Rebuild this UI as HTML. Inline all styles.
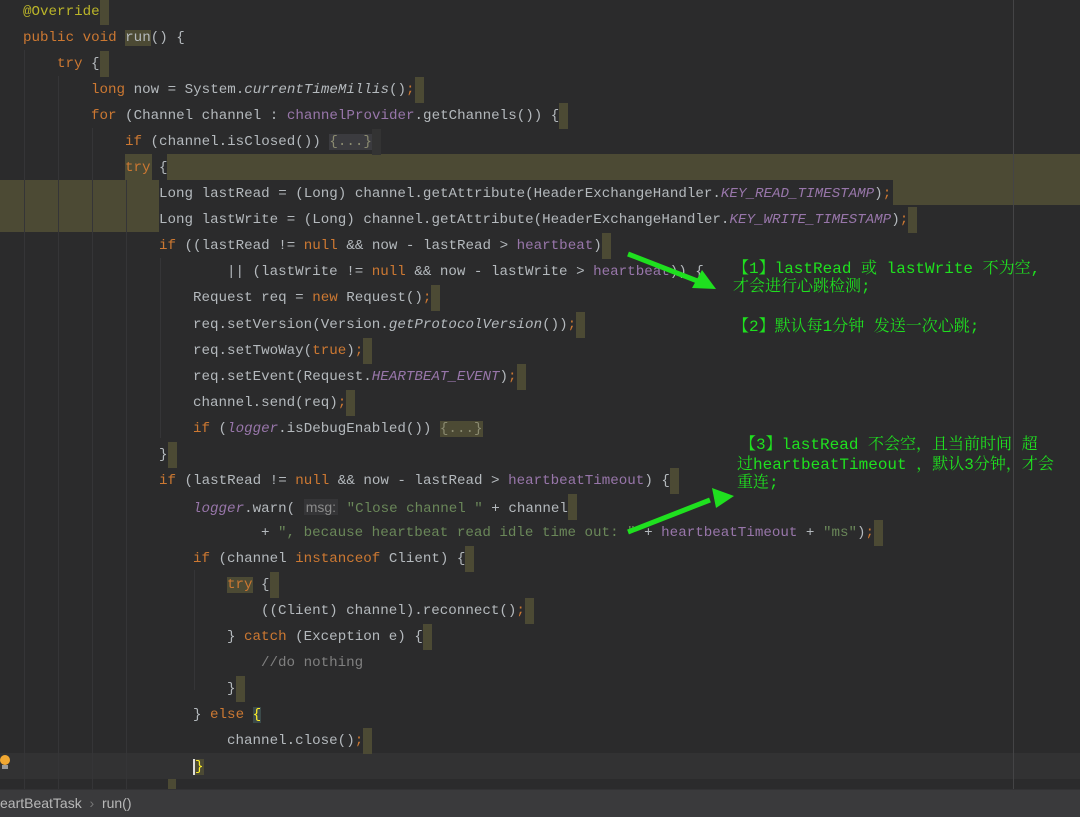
<!DOCTYPE html>
<html><head><meta charset="utf-8"><style>
body{margin:0;width:1080px;height:816px;overflow:hidden;background:#2b2b2c;position:relative;font-family:"Liberation Mono",monospace;font-size:14.2px;color:#b4b9bd}
.l{position:absolute;height:26px;line-height:26px;white-space:pre}
.k{color:#cc7832}.f{color:#9876aa}.i{font-style:italic}.s{color:#6a8759}.c{color:#808080}.a{color:#bbb529}
.m{display:inline-block;width:9px;height:26px;background:#4c4a34;vertical-align:top}
.fo{background:#3b3b3f;color:#8a8a70}
.hl{position:absolute;background:#4c4a34}
.g{position:absolute;width:1px;background:#353537}
.ann{position:absolute;color:#1fe01f;font-family:"Liberation Mono","Noto Serif CJK SC",monospace;font-size:16px;line-height:18px;white-space:pre}
.hint{color:#8a8a8a;background:#353537;font-family:"Liberation Sans",sans-serif;font-size:14px;padding:0 2px}
</style></head><body>
<div style="position:absolute;left:0;top:753px;width:1080px;height:26px;background:#323233"></div>
<div class="hl" style="left:125px;top:154px;width:27px;height:26px"></div>
<div class="hl" style="left:167px;top:154px;width:913px;height:26px"></div>
<div class="hl" style="left:893px;top:180px;width:187px;height:25px"></div>
<div class="hl" style="left:0;top:180px;width:159px;height:52px"></div>
<div style="position:absolute;left:1013px;top:0;width:1px;height:790px;background:#444446"></div>
<div class="g" style="left:24px;top:50px;height:740px"></div>
<div class="g" style="left:58px;top:76px;height:714px"></div>
<div class="g" style="left:92px;top:128px;height:662px"></div>
<div class="g" style="left:126px;top:180px;height:610px"></div>
<div class="g" style="left:160px;top:258px;height:180px"></div>
<div class="g" style="left:194px;top:570px;height:120px"></div>

<div class="l a" style="left:23px;top:-1px">@Override<span class="m"></span></div>
<div class="l" style="left:23px;top:25px"><span class="k">public void </span><span style="background:#4c4a34">run</span>() {</div>
<div class="l" style="left:57px;top:51px"><span class="k">try</span> {<span class="m"></span></div>
<div class="l" style="left:91px;top:77px"><span class="k">long</span> now = System.<span class="i">currentTimeMillis</span>()<span class="k">;</span><span class="m"></span></div>
<div class="l" style="left:91px;top:103px"><span class="k">for</span> (Channel channel : <span class="f">channelProvider</span>.getChannels()) {<span class="m"></span></div>
<div class="l" style="left:125px;top:129px"><span class="k">if</span> (channel.isClosed()) <span class="fo">{...}</span><span class="m" style="background:#333"></span></div>
<div class="l" style="left:125px;top:155px"><span class="k">try</span> {</div>
<div class="l" style="left:159px;top:181px">Long lastRead = (Long) channel.getAttribute(HeaderExchangeHandler.<span class="f i">KEY_READ_TIMESTAMP</span>)<span class="k">;</span></div>
<div class="l" style="left:159px;top:207px">Long lastWrite = (Long) channel.getAttribute(HeaderExchangeHandler.<span class="f i">KEY_WRITE_TIMESTAMP</span>)<span class="k">;</span><span class="m"></span></div>
<div class="l" style="left:159px;top:233px"><span class="k">if</span> ((lastRead != <span class="k">null</span> &amp;&amp; now - lastRead &gt; <span class="f">heartbeat</span>)<span class="m"></span></div>
<div class="l" style="left:227px;top:259px">|| (lastWrite != <span class="k">null</span> &amp;&amp; now - lastWrite &gt; <span class="f">heartbeat</span>)) {</div>
<div class="l" style="left:193px;top:285px">Request req = <span class="k">new</span> Request()<span class="k">;</span><span class="m"></span></div>
<div class="l" style="left:193px;top:312px">req.setVersion(Version.<span class="i">getProtocolVersion</span>())<span class="k">;</span><span class="m"></span></div>
<div class="l" style="left:193px;top:338px">req.setTwoWay(<span class="k">true</span>)<span class="k">;</span><span class="m"></span></div>
<div class="l" style="left:193px;top:364px">req.setEvent(Request.<span class="f i">HEARTBEAT_EVENT</span>)<span class="k">;</span><span class="m"></span></div>
<div class="l" style="left:193px;top:390px">channel.send(req)<span class="k">;</span><span class="m"></span></div>
<div class="l" style="left:193px;top:416px"><span class="k">if</span> (<span class="f i">logger</span>.isDebugEnabled()) <span class="fo" style="background:#4c4a34">{...}</span></div>
<div class="l" style="left:159px;top:442px">}<span class="m"></span></div>
<div class="l" style="left:159px;top:468px"><span class="k">if</span> (lastRead != <span class="k">null</span> &amp;&amp; now - lastRead &gt; <span class="f">heartbeatTimeout</span>) {<span class="m"></span></div>
<div class="l" style="left:193px;top:494px"><span class="f i">logger</span>.warn( <span class="hint">msg:</span> <span class="s">"Close channel "</span> + channel<span class="m"></span></div>
<div class="l" style="left:261px;top:520px">+ <span class="s">", because heartbeat read idle time out: "</span> + <span class="f">heartbeatTimeout</span> + <span class="s">"ms"</span>)<span class="k">;</span><span class="m"></span></div>
<div class="l" style="left:193px;top:546px"><span class="k">if</span> (channel <span class="k">instanceof</span> Client) {<span class="m"></span></div>
<div class="l" style="left:227px;top:572px"><span class="k" style="background:#4c4a34">try</span> {<span class="m"></span></div>
<div class="l" style="left:261px;top:598px">((Client) channel).reconnect()<span class="k">;</span><span class="m"></span></div>
<div class="l" style="left:227px;top:624px">} <span class="k">catch</span> (Exception e) {<span class="m"></span></div>
<div class="l c" style="left:261px;top:650px">//do nothing</div>
<div class="l" style="left:227px;top:676px">}<span class="m"></span></div>
<div class="l" style="left:193px;top:702px">} <span class="k">else</span> <span style="color:#ffef28;background:#3b4a4a">{</span></div>
<div class="l" style="left:227px;top:728px">channel.close()<span class="k">;</span><span class="m"></span></div>
<div class="l" style="left:193px;top:754px"><span style="color:#ffef28;background:#4c4a34;border-left:2px solid #ddd">}</span></div>
<div class="hl" style="left:168px;top:779px;width:8px;height:10px"></div>
<div style="position:absolute;left:0;top:755px;width:10px;height:10px;border-radius:50%;background:#f0a732"></div>
<div style="position:absolute;left:2px;top:765px;width:6px;height:4px;background:#999"></div>

<div style="position:absolute;left:0;top:789px;width:1080px;height:27px;background:#3a3a3c;border-top:1px solid #323234;font-family:'Liberation Sans',sans-serif;font-size:14px;color:#b8b8b8;line-height:27px;white-space:pre">eartBeatTask  <span style="color:#777">›</span>  run()</div>

<svg style="position:absolute;left:0;top:0" width="1080" height="816">
<line x1="628" y1="254" x2="700" y2="282" stroke="#1fe01f" stroke-width="5"/>
<polygon points="716,289 692,288 702,270" fill="#1fe01f"/>
<line x1="628" y1="532" x2="710" y2="500" stroke="#1fe01f" stroke-width="5"/>
<polygon points="734,496 712,488 716,508" fill="#1fe01f"/>
</svg>
<div class="ann" style="left:733px;top:260px">【1】lastRead 或 lastWrite 不为空,
才会进行心跳检测;</div>
<div class="ann" style="left:733px;top:318px">【2】默认每1分钟 发送一次心跳;</div>
<div class="ann" style="left:740px;top:436px">【3】lastRead 不会空，且当前时间 超</div>
<div class="ann" style="left:737px;top:456px">过heartbeatTimeout ，默认3分钟，才会
重连;</div>
</body></html>
